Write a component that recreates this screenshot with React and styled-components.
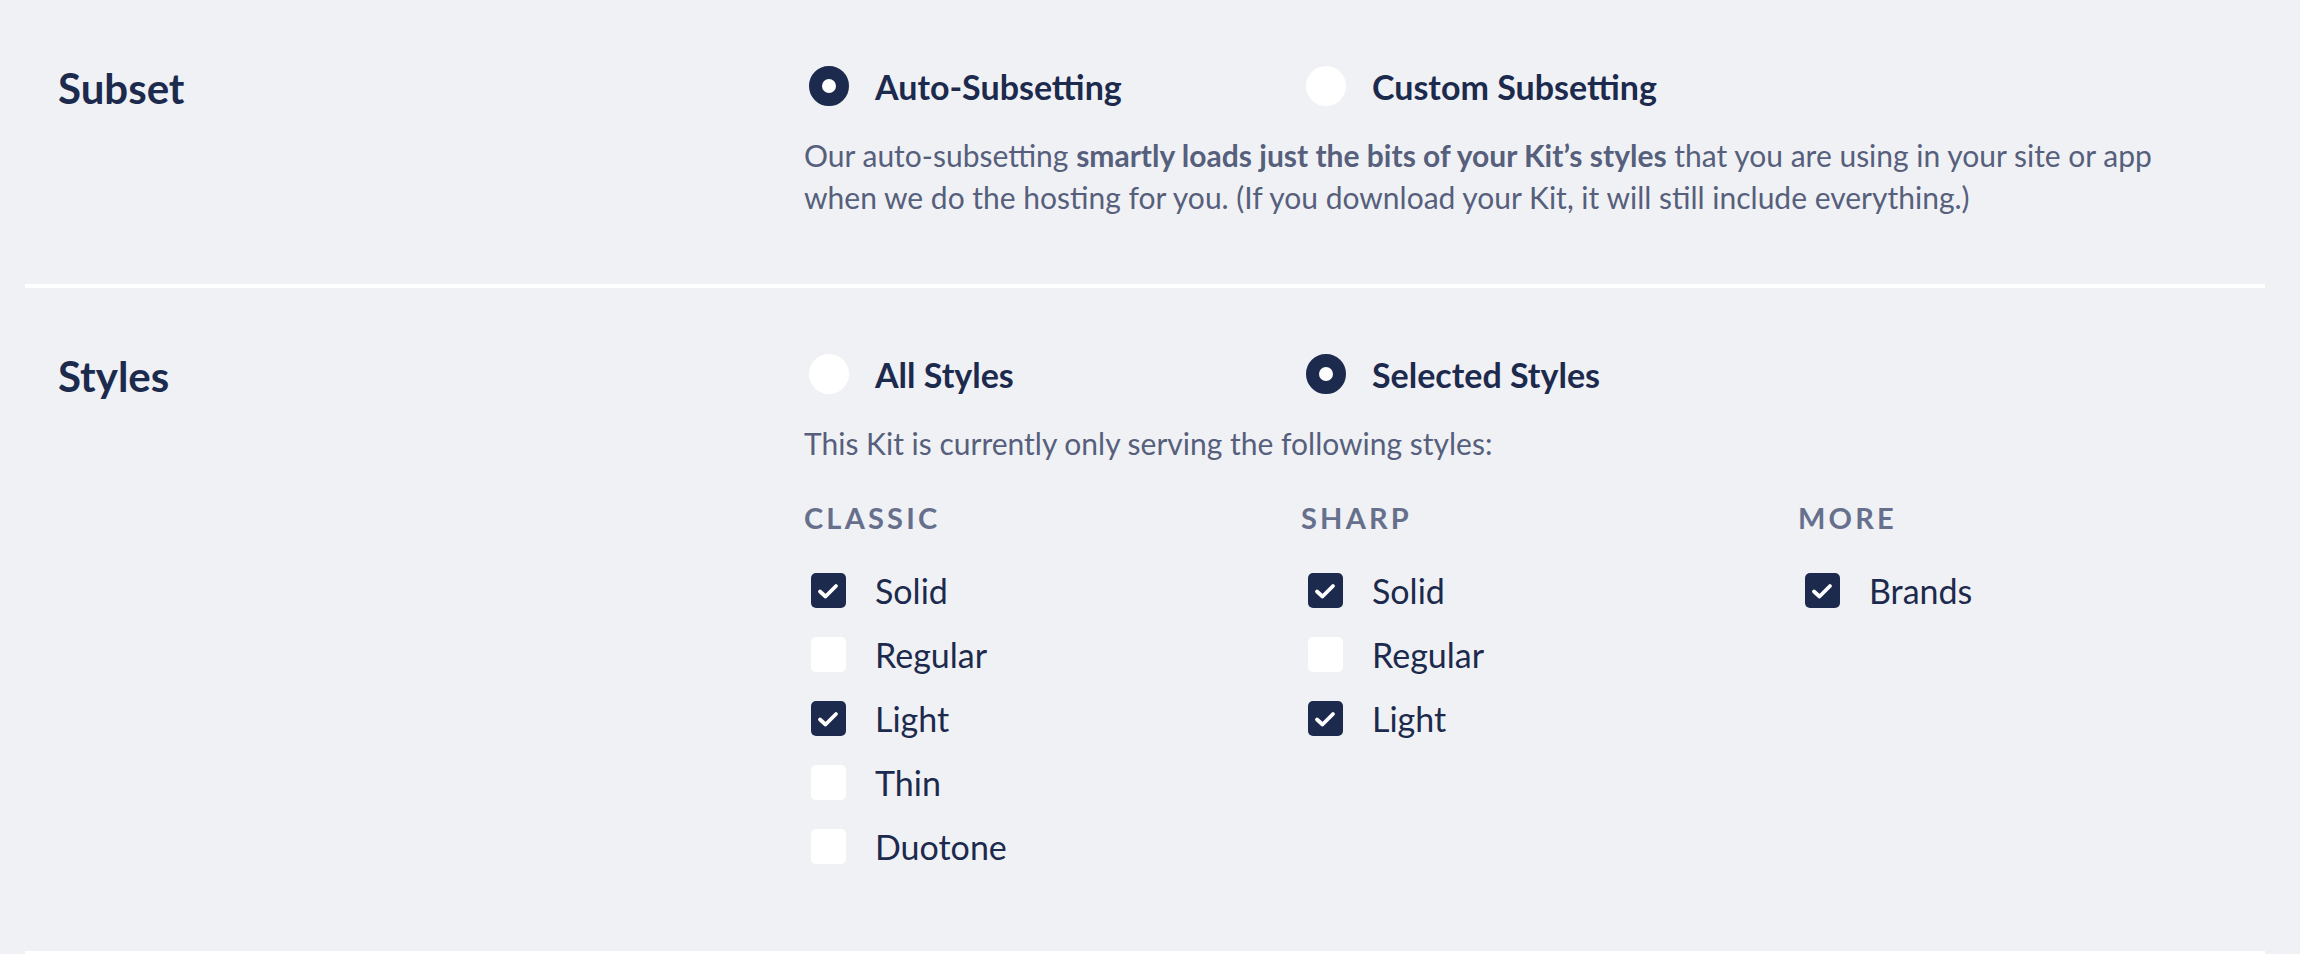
import React from "react";
import styled, { createGlobalStyle } from "styled-components";

const GlobalStyle = createGlobalStyle`
  html, body {
    margin: 0;
    padding: 0;
    background: #f0f1f4;
  }
  body {
    font-family: Lato, "Noto Sans", sans-serif;
    color: #1c2a4d;
  }
`;

const Page = styled.div`
  padding: 0 35px 0 25px;
`;

const Section = styled.section`
  display: grid;
  grid-template-columns: 746px 1fr;
  padding: 66px 0 ${(p) => p.$bottom || 66}px 33px;
  border-bottom: 4px solid #ffffff;
`;

const Title = styled.h2`
  margin: 0;
  padding-top: 2px;
  font-size: 42px;
  line-height: 40px;
  font-weight: 700;
  color: #1c2a4d;
`;

const Content = styled.div`
  display: flex;
  flex-direction: column;
`;

const ColumnGrid = styled.div`
  display: grid;
  grid-template-columns: repeat(3, 497px);
`;

const RadioOption = styled.label`
  display: flex;
  align-items: center;
  height: 40px;
`;

const RadioDot = styled.span`
  box-sizing: border-box;
  width: 40px;
  height: 40px;
  margin-left: 5px;
  border-radius: 50%;
  background: #ffffff;
  border: ${(p) => (p.$checked ? "13px solid #1c2a4d" : "none")};
  flex: none;
`;

const RadioLabel = styled.span`
  margin-left: 26px;
  font-size: 34px;
  font-weight: 700;
  color: #1c2a4d;
`;

const Paragraph = styled.p`
  margin: 28px 0 0;
  font-size: 30px;
  line-height: 42px;
  color: #565f7c;
  max-width: 1372px;
`;

const Emphasis = styled.strong`
  font-weight: 700;
`;

const Group = styled.div`
  display: flex;
  flex-direction: column;
`;

const GroupHeader = styled.h3`
  margin: 36px 0 0;
  font-size: 29px;
  line-height: 36px;
  font-weight: 700;
  letter-spacing: 0.11em;
  text-transform: uppercase;
  color: #666f8c;
`;

const CheckList = styled.ul`
  list-style: none;
  margin: 37px 0 0;
  padding: 0;
  display: flex;
  flex-direction: column;
  gap: 29px;
`;

const CheckItem = styled.li`
  display: flex;
  align-items: center;
  height: 35px;
`;

const Box = styled.span`
  width: 35px;
  height: 35px;
  margin-left: 7px;
  border-radius: 5px;
  background: ${(p) => (p.$checked ? "#1c2a4d" : "#ffffff")};
  display: flex;
  align-items: center;
  justify-content: center;
  flex: none;
`;

const CheckLabel = styled.span`
  margin-left: 29px;
  font-size: 34px;
  font-weight: 400;
  color: #1c2a4d;
`;

const CheckMark = () => (
  <svg width="35" height="35" viewBox="0 0 35 35" fill="none">
    <path
      d="M9 18.5 L14.5 23.5 L25 13"
      stroke="#ffffff"
      strokeWidth="3.8"
      strokeLinecap="round"
      strokeLinejoin="round"
    />
  </svg>
);

const Radio = ({ checked, children }) => (
  <RadioOption>
    <RadioDot $checked={checked} />
    <RadioLabel>{children}</RadioLabel>
  </RadioOption>
);

const Check = ({ checked, children }) => (
  <CheckItem>
    <Box $checked={checked}>{checked && <CheckMark />}</Box>
    <CheckLabel>{children}</CheckLabel>
  </CheckItem>
);

const groups = [
  {
    name: "Classic",
    items: [
      ["Solid", true],
      ["Regular", false],
      ["Light", true],
      ["Thin", false],
      ["Duotone", false],
    ],
  },
  {
    name: "Sharp",
    items: [
      ["Solid", true],
      ["Regular", false],
      ["Light", true],
    ],
  },
  {
    name: "More",
    items: [["Brands", true]],
  },
];

export default function App() {
  return (
    <Page>
      <GlobalStyle />
      <Section>
        <Title>Subset</Title>
        <Content>
          <ColumnGrid>
            <Radio checked>Auto-Subsetting</Radio>
            <Radio>Custom Subsetting</Radio>
          </ColumnGrid>
          <Paragraph>
            Our auto-subsetting{" "}
            <Emphasis>smartly loads just the bits of your Kit’s styles</Emphasis>{" "}
            that you are using in your site or app when we do the hosting for
            you. (If you download your Kit, it will still include everything.)
          </Paragraph>
        </Content>
      </Section>
      <Section $bottom={87}>
        <Title>Styles</Title>
        <Content>
          <ColumnGrid>
            <Radio>All Styles</Radio>
            <Radio checked>Selected Styles</Radio>
          </ColumnGrid>
          <Paragraph>
            This Kit is currently only serving the following styles:
          </Paragraph>
          <ColumnGrid>
            {groups.map((g) => (
              <Group key={g.name}>
                <GroupHeader>{g.name}</GroupHeader>
                <CheckList>
                  {g.items.map(([label, checked]) => (
                    <Check key={label} checked={checked}>
                      {label}
                    </Check>
                  ))}
                </CheckList>
              </Group>
            ))}
          </ColumnGrid>
        </Content>
      </Section>
    </Page>
  );
}
